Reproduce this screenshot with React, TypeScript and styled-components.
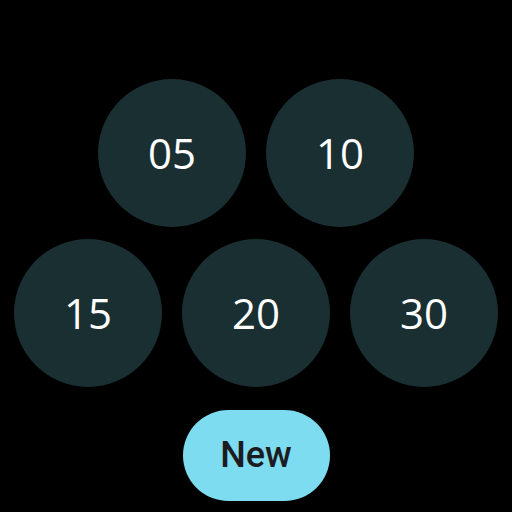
import React from "react";
import styled, { createGlobalStyle } from "styled-components";

const Global = createGlobalStyle`
  html, body { margin: 0; padding: 0; background: #000; }
  body { width: 512px; height: 512px; overflow: hidden; font-family: "Open Sans", "Noto Sans", sans-serif; }
`;

const Screen = styled.div`
  width: 512px;
  height: 512px;
  background: #000;
  display: flex;
  flex-direction: column;
  align-items: center;
  padding-top: 79px;
  box-sizing: border-box;
`;

const Row = styled.div<{ $mb: number }>`
  display: flex;
  gap: 20px;
  margin-bottom: ${(p) => p.$mb}px;
`;

const Circle = styled.button`
  width: 148px;
  height: 148px;
  border-radius: 50%;
  border: none;
  background: #1a2f31;
  color: #ffffff;
  font-family: "Open Sans", "Noto Sans", sans-serif;
  font-size: 42px;
  font-weight: 400;
  line-height: 1;
  display: flex;
  align-items: center;
  justify-content: center;
  padding: 0;
`;

const NewButton = styled.button`
  width: 147px;
  height: 91px;
  border-radius: 46px;
  border: none;
  background: #7ddcef;
  color: #1c1b1f;
  font-family: Roboto, "Noto Sans", sans-serif;
  font-size: 36px;
  font-weight: 500;
  line-height: 1;
  display: flex;
  align-items: center;
  justify-content: center;
  padding: 0 0 2px;
`;

export default function App() {
  return (
    <>
      <Global />
      <Screen>
        <Row $mb={12}>
          <Circle>05</Circle>
          <Circle>10</Circle>
        </Row>
        <Row $mb={23}>
          <Circle>15</Circle>
          <Circle>20</Circle>
          <Circle>30</Circle>
        </Row>
        <NewButton>New</NewButton>
      </Screen>
    </>
  );
}
